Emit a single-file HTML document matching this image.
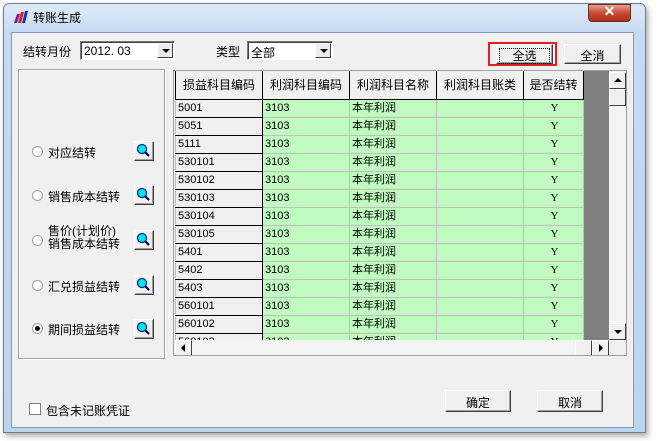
<!DOCTYPE html>
<html><head><meta charset="utf-8"><style>
*{box-sizing:border-box;margin:0;padding:0}
body{width:659px;height:441px;background:#fff;position:relative;overflow:hidden;font-family:"Liberation Sans","Noto Sans CJK SC","WenQuanYi Zen Hei",sans-serif;font-size:12px;color:#000}
.a{position:absolute}
.win{left:3px;top:3px;width:643px;height:430px;border:1px solid #6f7f93;border-radius:6px 6px 0 0;background:linear-gradient(#dfeaf7,#c6dbf3 30px,#bcd4ee);box-shadow:2px 3px 6px rgba(0,0,0,.35)}
.client{left:11px;top:32px;width:623px;height:396px;background:#f0f0f0;border:1px solid #7f9db9}
.combo{background:#fff;border:1px solid #7a7a7a;border-right-color:#fff;border-bottom-color:#fff;box-shadow:inset 1px 1px 0 #404040;height:19px;padding:2px 0 0 3px;font-size:12px}
.dd{position:absolute;right:1px;top:1px;width:16px;height:15px;background:#ececec;border:1px solid;border-color:#fff #404040 #404040 #fff}
.dd:after{content:"";position:absolute;left:4px;top:5px;border:4px solid transparent;border-top:4px solid #000;border-bottom:0}
.btn{background:#f0f0f0;border:1px solid;border-color:#fff #404040 #404040 #fff;box-shadow:inset -1px -1px 0 #a0a0a0;text-align:center;font-size:12px}
.grp{border:1px solid #a0a0a0;box-shadow:1px 1px 0 #fff inset,1px 1px 0 #fff}
.radio{width:11px;height:11px;border-radius:50%;border:1px solid #a0a0a0;background:#fff}
.mag{width:20px;height:20px}
table{border-collapse:collapse;table-layout:fixed}
td{height:18px;border:1px solid #c0c0c0;padding:1px 0 0 2px;font-size:11px;white-space:nowrap;overflow:hidden;line-height:15px}
th{height:28px;border:1px solid #000;border-top:0;font-weight:normal;font-size:12px;background:#f0f0f0}
td.g{background:#c0fcc0}
td.w{background:#f0f0f0;border-bottom:1px solid #000;border-right:1px solid #000}
td.y{text-align:center;font-family:"Liberation Serif",serif}
.sb{background:#f0f0f0;border:1px solid;border-color:#fff #404040 #404040 #fff}
</style></head><body>
<div class="a win"></div>
<svg class="a" style="left:13px;top:10px" width="16" height="14"><polygon points="1,13 4,4 7,4 4,13" fill="#8a1a8a"/><polygon points="5,13 8,2 11,2 8,13" fill="#d02020"/><polygon points="9,13 12,1 15,1 12,13" fill="#2030b0"/></svg>
<div class="a" style="left:33px;top:9px;font-size:12px">转账生成</div>
<div class="a" style="left:588px;top:4px;width:43px;height:18px;border:1px solid #6b2b20;border-radius:0 0 4px 4px;background:linear-gradient(#e8a090,#c84a30 50%,#b03018)"></div>
<div class="a" style="left:588px;top:3px;width:43px;text-align:center;color:#fff;font-weight:bold;font-size:14px">✕</div>
<div class="a client"></div>
<div class="a" style="left:23px;top:43px">结转月份</div>
<div class="a combo" style="left:80px;top:41px;width:95px">2012. 03<div class="dd"></div></div>
<div class="a" style="left:216px;top:43px">类型</div>
<div class="a combo" style="left:247px;top:41px;width:86px">全部<div class="dd"></div></div>
<div class="a" style="left:488px;top:42px;width:69px;height:24px;border:2px solid #e02020"></div>
<div class="a btn" style="left:496px;top:44px;width:57px;height:20px;padding-top:2px"><span style="border:1px dotted #000;padding:0 12px">全选</span></div>
<div class="a btn" style="left:564px;top:44px;width:57px;height:20px;padding-top:2px">全消</div>
<div class="a grp" style="left:18px;top:69px;width:147px;height:290px"></div>
<div class="a radio" style="left:32px;top:146px"></div>
<div class="a" style="left:48px;top:144px">对应结转</div>
<div class="a radio" style="left:32px;top:190px"></div>
<div class="a" style="left:48px;top:188px">销售成本结转</div>
<div class="a radio" style="left:32px;top:235px"></div>
<div class="a" style="left:48px;top:225px;line-height:13px">售价(计划价)<br>销售成本结转</div>
<div class="a radio" style="left:32px;top:280px"></div>
<div class="a" style="left:48px;top:278px">汇兑损益结转</div>
<div class="a radio" style="left:32px;top:323px"><div style="width:5px;height:5px;background:#000;border-radius:50%;margin:2px"></div></div>
<div class="a" style="left:48px;top:321px">期间损益结转</div>
<div class="a btn" style="left:134px;top:141px;width:20px;height:20px"></div>
<div class="a btn" style="left:134px;top:185px;width:20px;height:20px"></div>
<div class="a btn" style="left:134px;top:230px;width:20px;height:20px"></div>
<div class="a btn" style="left:134px;top:275px;width:20px;height:20px"></div>
<div class="a btn" style="left:134px;top:319px;width:20px;height:20px"></div>
<svg class="a" style="left:134px;top:141px" width="20" height="200">
<g id="m"><circle cx="8" cy="8" r="4.5" fill="#00e8f8" stroke="#003080" stroke-width="1.3"/><line x1="11" y1="11" x2="15" y2="15" stroke="#000060" stroke-width="2.2"/></g>
<use href="#m" y="44"/><use href="#m" y="89"/><use href="#m" y="134"/><use href="#m" y="178"/></svg>
<div class="a" style="left:173px;top:70px;width:454px;height:286px;border:1px solid #a0a0a0;background:#f0f0f0;overflow:hidden">
<div class="a" style="left:408px;top:0;width:28px;height:270px;background:#808080"></div>
<table class="a" style="left:1px;top:0;width:408px">
<colgroup><col style="width:87px"><col style="width:87px"><col style="width:87px"><col style="width:87px"><col style="width:60px"></colgroup>
<tr><th>损益科目编码</th><th>利润科目编码</th><th>利润科目名称</th><th>利润科目账类</th><th>是否结转</th></tr>
<tr><td class="w">5001</td><td class="g">3103</td><td class="g">本年利润</td><td class="g"></td><td class="g y">Y</td></tr>
<tr><td class="w">5051</td><td class="g">3103</td><td class="g">本年利润</td><td class="g"></td><td class="g y">Y</td></tr>
<tr><td class="w">5111</td><td class="g">3103</td><td class="g">本年利润</td><td class="g"></td><td class="g y">Y</td></tr>
<tr><td class="w">530101</td><td class="g">3103</td><td class="g">本年利润</td><td class="g"></td><td class="g y">Y</td></tr>
<tr><td class="w">530102</td><td class="g">3103</td><td class="g">本年利润</td><td class="g"></td><td class="g y">Y</td></tr>
<tr><td class="w">530103</td><td class="g">3103</td><td class="g">本年利润</td><td class="g"></td><td class="g y">Y</td></tr>
<tr><td class="w">530104</td><td class="g">3103</td><td class="g">本年利润</td><td class="g"></td><td class="g y">Y</td></tr>
<tr><td class="w">530105</td><td class="g">3103</td><td class="g">本年利润</td><td class="g"></td><td class="g y">Y</td></tr>
<tr><td class="w">5401</td><td class="g">3103</td><td class="g">本年利润</td><td class="g"></td><td class="g y">Y</td></tr>
<tr><td class="w">5402</td><td class="g">3103</td><td class="g">本年利润</td><td class="g"></td><td class="g y">Y</td></tr>
<tr><td class="w">5403</td><td class="g">3103</td><td class="g">本年利润</td><td class="g"></td><td class="g y">Y</td></tr>
<tr><td class="w">560101</td><td class="g">3103</td><td class="g">本年利润</td><td class="g"></td><td class="g y">Y</td></tr>
<tr><td class="w">560102</td><td class="g">3103</td><td class="g">本年利润</td><td class="g"></td><td class="g y">Y</td></tr>
<tr><td class="w">560103</td><td class="g">3103</td><td class="g">本年利润</td><td class="g"></td><td class="g y">Y</td></tr>
</table>
<div class="a" style="left:1px;top:269px;width:434px;height:16px;background:#f4f4f4"></div>
<div class="a sb" style="left:1px;top:269px;width:17px;height:16px"><div style="margin:3px 0 0 5px;width:0;border:4px solid transparent;border-right:4px solid #000;border-left:0"></div></div>
<div class="a sb" style="left:401px;top:269px;width:17px;height:16px"></div>
<div class="a sb" style="left:418px;top:269px;width:17px;height:16px"><div style="margin:3px 0 0 6px;width:0;border:4px solid transparent;border-left:4px solid #000;border-right:0"></div></div>
<div class="a" style="left:435px;top:0;width:17px;height:270px;background:#f4f4f4"></div>
<div class="a sb" style="left:435px;top:1px;width:17px;height:17px"><div style="margin:5px 0 0 4px;width:0;border:4px solid transparent;border-bottom:4px solid #000;border-top:0"></div></div>
<div class="a sb" style="left:435px;top:18px;width:17px;height:17px"></div>
<div class="a sb" style="left:435px;top:252px;width:17px;height:17px"><div style="margin:6px 0 0 4px;width:0;border:4px solid transparent;border-top:4px solid #000;border-bottom:0"></div></div>
</div>
<div class="a" style="left:29px;top:403px;width:12px;height:12px;background:#fff;border:1px solid #808080"></div>
<div class="a" style="left:46px;top:402px">包含未记账凭证</div>
<div class="a btn" style="left:445px;top:390px;width:66px;height:22px;padding-top:3px">确定</div>
<div class="a btn" style="left:537px;top:390px;width:66px;height:22px;padding-top:3px">取消</div>
</body></html>
